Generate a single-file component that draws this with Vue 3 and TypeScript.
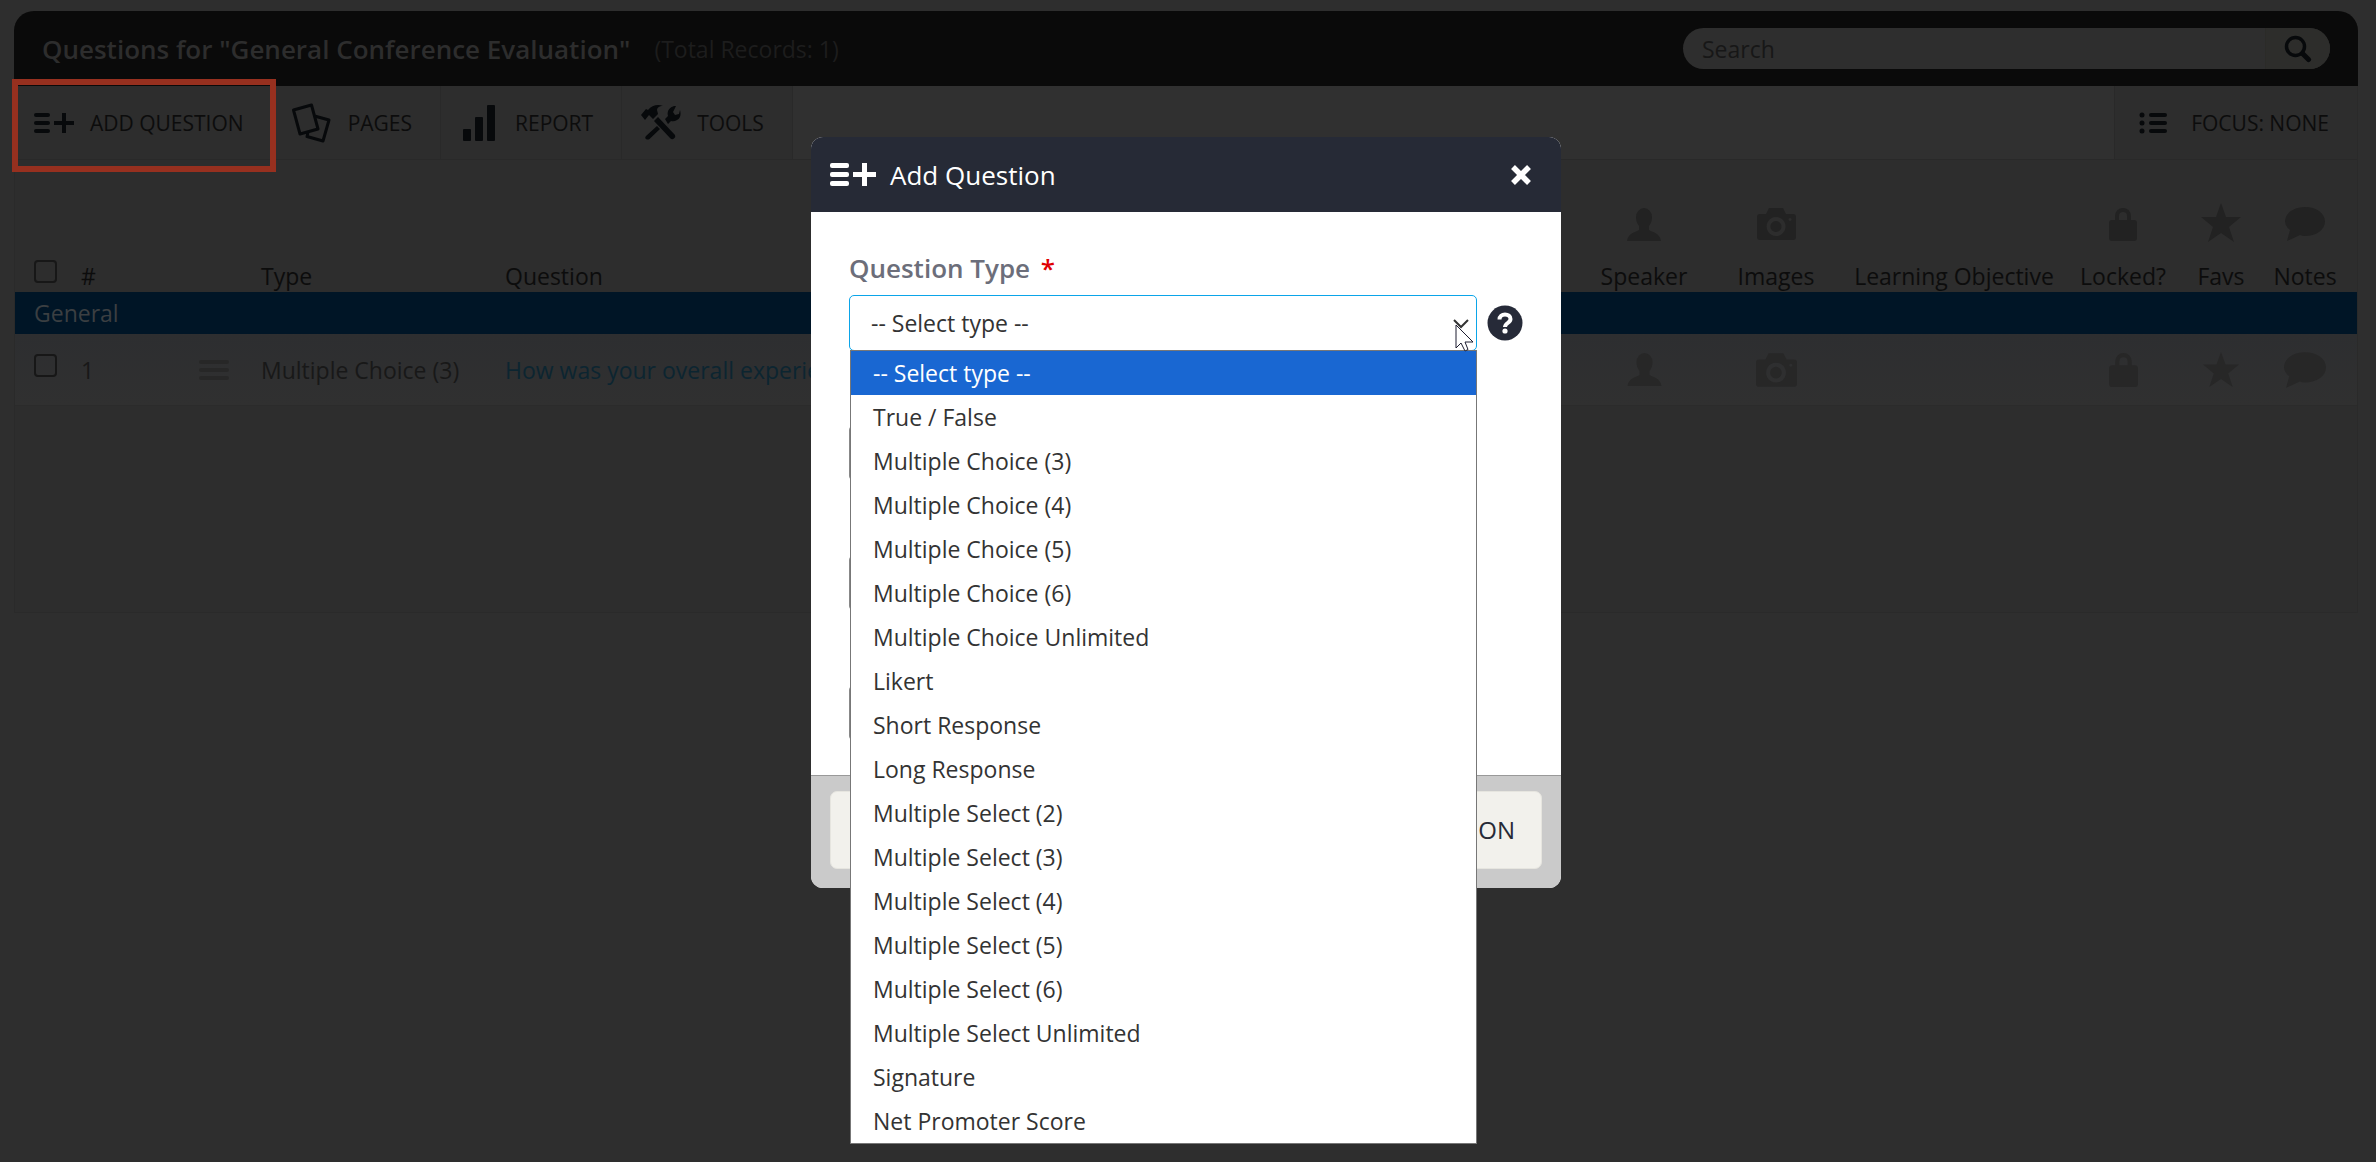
<script setup lang="ts">
import { ref } from 'vue'

interface IconColumn {
  label: string
  icon: string
}

const types: string[] = [
  '-- Select type --',
  'True / False',
  'Multiple Choice (3)',
  'Multiple Choice (4)',
  'Multiple Choice (5)',
  'Multiple Choice (6)',
  'Multiple Choice Unlimited',
  'Likert',
  'Short Response',
  'Long Response',
  'Multiple Select (2)',
  'Multiple Select (3)',
  'Multiple Select (4)',
  'Multiple Select (5)',
  'Multiple Select (6)',
  'Multiple Select Unlimited',
  'Signature',
  'Net Promoter Score',
]

const lock = 'M6 13V9a8 8 0 0 1 16 0v4h3q3 0 3 3v15q0 3-3 3H3q-3 0-3-3V16q0-3 3-3zM10 13h8V9a4 4 0 0 0-8 0z'
const star = 'M20-4l5 14h15l-12 10 5 15-13-9-13 9 5-15L0 10h15z'
const bubble = 'M20 0c11 0 20 6 20 14.500S31 29 20 29q-3 0-5-1Q9 31 2 34l3-11Q0 19 0 14.500C0 6 9 0 20 0z'

const columns: IconColumn[] = [
  { label: 'Speaker', icon: 'M10 10a8 9 0 0 1 16 0c0 4-1 6-3 9v4c3 2 11 3 12 11H1c1-8 9-9 12-11v-4c-2-3-3-5-3-9z' },
  {
    label: 'Images',
    icon: 'M0 10q0-3 3-3h6l3-6h14l3 6h7q3 0 3 3v20q0 3-3 3H3q-3 0-3-3zM19 10a9.500 9.500 0 1 0 .1 0zM19 14a5.500 5.500 0 1 1-.1 0zM33 11a1.500 1.500 0 1 0 .1 0z',
  },
  { label: 'Learning Objective', icon: '' },
  { label: 'Locked?', icon: lock },
  { label: 'Favs', icon: star },
  { label: 'Notes', icon: bubble },
]

const selected = ref(types[0])
const search = ref('')
</script>

<template>
  <div class="page">
    <main class="panel">
      <header class="panel-head">
        <h1>Questions for "General Conference Evaluation"</h1>
        <span class="total">(Total Records: 1)</span>
        <form class="search" @submit.prevent>
          <input v-model="search" type="search" placeholder="Search" aria-label="Search" />
          <button type="submit" aria-label="Run search">
            <svg width="28" height="28" viewBox="0 0 28 28" fill="none" stroke="#07090b">
              <circle cx="11.500" cy="11.500" r="9" stroke-width="3.500" />
              <path d="M18.500 18.500l6 6" stroke-width="5" stroke-linecap="round" />
            </svg>
          </button>
        </form>
      </header>

      <nav class="toolbar">
        <button type="button" class="add">
          <svg width="40" height="22" viewBox="0 0 40 22" fill="#07090b">
            <rect y="1" width="16" height="4" rx="2" /><rect y="9" width="16" height="4" rx="2" /><rect y="17" width="16" height="4" rx="2" />
            <path d="M28 1h4v8h8v4h-8v8h-4v-8h-8V9h8z" />
          </svg>
          <span>ADD QUESTION</span>
        </button>
        <button type="button" class="pages">
          <svg width="40" height="40" viewBox="0 0 40 40" fill="none" stroke="#07090b" stroke-width="3" stroke-linejoin="round">
            <path d="M2.500 7L20.500 2l6.500 24-18 5zM23.500 13L38 17l-6 21-16-4.500 1-4" />
          </svg>
          <span>PAGES</span>
        </button>
        <button type="button" class="report">
          <svg width="32" height="36" viewBox="0 0 32 36" fill="#07090b">
            <rect y="24" width="8" height="12" rx="1" /><rect x="12" y="12" width="8" height="24" rx="1" /><rect x="24" width="8" height="36" rx="1" />
          </svg>
          <span>REPORT</span>
        </button>
        <button type="button" class="tools">
          <svg width="40" height="36" viewBox="0 0 40 36" fill="#07090b">
            <path d="M0 10l5-6 2 1C11 0 17-1 22 1c-4 0-6 2-6 4l1 4-5 5-4-4-4 5z" />
            <path d="M13 16l4-4 17 18q1 2-1 3.500t-3.500 0z" />
            <path d="M5 31l11-10 3 3L8.500 34q-2 1-3.500 0t0-3zM24 14l3-3q-2-7 6-10l2 0-3 6 2 3 4-1 1-4q2 7-3 10-3 2-6 1l-3 3z" />
          </svg>
          <span>TOOLS</span>
        </button>
        <button type="button" class="focus">
          <svg width="28" height="22" viewBox="0 0 28 22" fill="#07090b">
            <circle cx="3" cy="3" r="2.500" /><circle cx="3" cy="11" r="2.500" /><circle cx="3" cy="19" r="2.500" />
            <rect x="10" y="1" width="18" height="4" rx="2" /><rect x="10" y="9" width="18" height="4" rx="2" /><rect x="10" y="17" width="18" height="4" rx="2" />
          </svg>
          <span>FOCUS: NONE</span>
        </button>
      </nav>

      <table class="grid">
        <colgroup>
          <col class="w-check" /><col class="w-num" /><col class="w-drag" /><col class="w-type" /><col />
          <col class="w-speaker" /><col class="w-images" /><col class="w-learn" /><col class="w-lock" /><col class="w-fav" /><col class="w-note" />
        </colgroup>
        <thead>
          <tr>
            <th class="check"><input type="checkbox" aria-label="Select all questions" /></th>
            <th>#</th>
            <th></th>
            <th>Type</th>
            <th>Question</th>
            <th v-for="c in columns" :key="c.label" class="mid">
              <svg v-if="c.label === 'Speaker'" width="36" height="40" viewBox="0 0 36 40"><path :d="c.icon" /></svg>
              <svg v-else-if="c.label === 'Images'" width="39" height="40" viewBox="0 0 39 40"><path fill-rule="evenodd" :d="c.icon" /></svg>
              <svg v-else-if="c.label === 'Locked?'" width="28" height="40" viewBox="0 0 28 40"><path fill-rule="evenodd" :d="c.icon" /></svg>
              <svg v-else-if="c.icon" width="40" height="40" viewBox="0 0 40 40"><path :d="c.icon" /></svg>
              {{ c.label }}
            </th>
          </tr>
        </thead>
        <tbody>
          <tr class="group"><td colspan="11">General</td></tr>
          <tr class="row">
            <td class="check"><input type="checkbox" aria-label="Select question 1" /></td>
            <td>1</td>
            <td>
              <svg class="drag" width="30" height="22" viewBox="0 0 30 22">
                <rect y="1" width="30" height="4" rx="2" /><rect y="9" width="30" height="4" rx="2" /><rect y="17" width="30" height="4" rx="2" />
              </svg>
            </td>
            <td>Multiple Choice (3)</td>
            <td><a href="#">How was your overall experience?</a></td>
            <td v-for="c in columns" :key="c.label" class="mid">
              <svg v-if="c.label === 'Speaker'" width="37" height="36" viewBox="0 0 36 36"><path :d="c.icon" /></svg>
              <svg v-else-if="c.label === 'Images'" width="41" height="36" viewBox="0 0 39 34"><path fill-rule="evenodd" :d="c.icon" /></svg>
              <svg v-else-if="c.label === 'Locked?'" width="29" height="36" viewBox="0 0 28 35"><path fill-rule="evenodd" :d="c.icon" /></svg>
              <svg v-else-if="c.label === 'Favs'" width="36" height="36" viewBox="0 -4 40 40"><path :d="c.icon" /></svg>
              <svg v-else-if="c.label === 'Notes'" width="42" height="36" viewBox="0 0 40 34"><path :d="c.icon" /></svg>
            </td>
          </tr>
        </tbody>
      </table>
    </main>

    <div class="layer">
      <section class="modal" role="dialog" aria-labelledby="modal-title">
        <header class="modal-head">
          <svg width="46" height="24" viewBox="0 0 46 24" fill="#fff">
            <rect width="19" height="5" rx="2" /><rect y="9" width="19" height="5" rx="2" /><rect y="18" width="19" height="5" rx="2" />
            <path d="M32 0h5v9h9v5h-9v9h-5v-9h-9V9h9z" />
          </svg>
          <h2 id="modal-title">Add Question</h2>
          <button type="button" class="close" aria-label="Close">
            <svg width="20" height="20" viewBox="0 0 20 20" stroke="#fff" stroke-width="5.500"><path d="M2 2l16 16M18 2L2 18" /></svg>
          </button>
        </header>
        <div class="modal-body">
          <label for="qtype">Question Type <span class="req">*</span></label>
          <div class="field">
            <div class="select-wrap">
              <select id="qtype" v-model="selected">
                <option v-for="t in types" :key="t">{{ t }}</option>
              </select>
              <svg class="chevron" width="16" height="10" viewBox="0 0 16 10" fill="none" stroke="#333" stroke-width="2"><path d="M1 1l7 7 7-7" /></svg>
              <ul class="menu" role="listbox" aria-label="Question types">
                <li v-for="t in types" :key="t" role="option" :aria-selected="t === selected" :class="{ active: t === selected }">{{ t }}</li>
              </ul>
              <svg class="pointer" width="20" height="28" viewBox="0 0 20 28" fill="#fff" stroke="#1d1d30" stroke-width="1">
                <path d="M1 1v23l5-5 4 8 3-1.500-3-7.500h8z" />
              </svg>
            </div>
            <button type="button" class="help" aria-label="Help">
              <svg width="36" height="36" viewBox="0 0 36 36">
                <circle cx="18" cy="18" r="17.500" fill="#262a38" />
                <path d="M12.500 14.500c0-3.500 2.500-5 5.500-5s5.500 1.500 5.500 4.500c0 4-5.500 4-5.500 8" fill="none" stroke="#fff" stroke-width="4" />
                <circle cx="18" cy="26" r="2.600" fill="#fff" />
              </svg>
            </button>
          </div>
          <input class="text" type="text" aria-label="Question" />
          <input class="text" type="text" aria-label="Page" />
          <input class="text" type="text" aria-label="Order" />
        </div>
        <footer class="modal-foot">
          <button type="button">ADD QUESTION</button>
        </footer>
      </section>
    </div>
  </div>
</template>

<style>
body {
  background: #2e2e2e;
}
</style>

<style scoped>
.page {
  box-sizing: border-box;
  min-height: 100vh;
  padding: 11px 18px 0 14px;
  background: #2e2e2e;
  color: #0c0c0c;
  font-family: "Open Sans", "Noto Sans", sans-serif;
  font-size: 23px;
  line-height: 32px;
}
button,
input,
select {
  font: inherit;
  color: inherit;
}
button {
  padding: 0;
  border: 0;
  background: none;
}
svg {
  display: block;
  flex: none;
}
.panel {
  min-height: 602px;
  box-sizing: border-box;
  border-radius: 20px 20px 0 0;
  background: #2d2d2d;
  border: 1px solid #2a2a2a;
  border-top: 0;
}
.panel-head {
  display: flex;
  align-items: center;
  gap: 24px;
  height: 75px;
  margin: 0 -1px;
  padding: 0 28px 0 28px;
  border-radius: 20px 20px 0 0;
  background: #0a0a0a;
}
h1 {
  margin: 0;
  font-size: 26px;
  font-weight: 600;
  color: #2d2d2d;
}
.total {
  color: #1d1d1d;
}
.search {
  display: flex;
  width: 647px;
  height: 41px;
  margin-left: auto;
  overflow: hidden;
  border-radius: 21px;
  background: #2e2e2e;
}
.search input {
  flex: 1;
  min-width: 0;
  padding: 0 19px;
  border: 0;
  background: none;
  outline: 0;
}
.search input::placeholder {
  color: #171717;
  opacity: 1;
}
.search button {
  display: flex;
  align-items: center;
  width: 65px;
  padding-left: 18px;
  border-left: 1px solid #2b2b28;
  background: #2d2d2b;
}
.toolbar {
  display: flex;
  height: 73px;
  border-bottom: 1px solid #292929;
  background: #303030;
  font-size: 21px;
  font-weight: 500;
}
.toolbar button {
  display: flex;
  align-items: center;
  background: #2d2d2d;
  border-right: 1px solid #292929;
}
.toolbar .add {
  position: relative;
  gap: 16px;
  padding: 0 30px 0 19px;
}
.toolbar .add::after {
  content: "";
  position: absolute;
  inset: -7px -2px -13px -3px;
  border: 6px solid #97301f;
}
.toolbar .pages {
  gap: 17px;
  padding: 0 28px 0 16px;
}
.toolbar .report {
  gap: 20px;
  padding: 0 28px 0 22px;
}
.toolbar .tools {
  gap: 16px;
  padding: 0 28px 0 19px;
}
.toolbar .focus {
  gap: 24px;
  margin-left: auto;
  padding: 0 28px 0 24px;
  border-right: 0;
  border-left: 1px solid #292929;
}
.grid {
  width: 100%;
  table-layout: fixed;
  border-collapse: collapse;
}
.w-check { width: 66px; }
.w-num { width: 118px; }
.w-drag { width: 62px; }
.w-type { width: 244px; }
.w-speaker { width: 114px; }
.w-images { width: 150px; }
.w-learn { width: 206px; }
.w-lock { width: 132px; }
.w-fav { width: 64px; }
.w-note { width: 104px; }
.grid th,
.grid td {
  padding: 0;
  text-align: left;
  font-weight: 400;
  white-space: nowrap;
}
.grid th {
  height: 132px;
  font-weight: 500;
  vertical-align: bottom;
}
.grid .mid {
  text-align: center;
}
.grid .mid svg {
  margin: 0 auto;
  overflow: visible;
  fill: #222;
}
.grid th.mid svg {
  margin-bottom: 13px;
}
.grid .row svg {
  fill: #272727;
}
.grid .check {
  padding-left: 19px;
}
.check input {
  display: block;
  appearance: none;
  box-sizing: border-box;
  width: 23px;
  height: 23px;
  margin: 0 0 9px;
  border: 2px solid #171717;
  border-radius: 4px;
}
.grid .group td {
  height: 42px;
  padding-left: 19px;
  background: #001526;
  color: #3b3f42;
}
.row {
  background: linear-gradient(#2d2e30, #303030);
  color: #181818;
}
.grid .row td {
  height: 71px;
  border-bottom: 1px solid #2b2b2b;
}
.row a {
  color: #0c2530;
  text-decoration: none;
}
.layer {
  position: absolute;
  top: 0;
  left: 0;
  right: 0;
  display: flex;
  justify-content: center;
  padding: 137px 4px 0 0;
}
.modal {
  display: flex;
  flex-direction: column;
  width: 750px;
  border-radius: 12px;
  background: #fff;
  color: #333;
}
.modal-head {
  display: flex;
  align-items: center;
  gap: 14px;
  height: 75px;
  padding: 0 30px 0 19px;
  border-radius: 12px 12px 0 0;
  background: #262a36;
  color: #fff;
}
h2 {
  margin: 0;
  font-size: 26px;
  font-weight: 400;
}
.close {
  margin-left: auto;
}
.modal-body {
  display: flex;
  flex-direction: column;
  padding: 40px 38px 34px;
}
label {
  margin-bottom: 11px;
  color: #6c6e7a;
  font-size: 26px;
  font-weight: 600;
}
.req {
  margin-left: 4px;
  color: #e00000;
}
.field {
  display: flex;
  align-items: center;
  gap: 10px;
}
.select-wrap {
  position: relative;
  width: 628px;
}
select {
  display: block;
  appearance: none;
  box-sizing: border-box;
  width: 100%;
  height: 56px;
  padding: 0 21px;
  border: 1px solid #0ba5e9;
  border-radius: 5px;
  background: #fff;
  outline: 0;
}
.chevron {
  position: absolute;
  right: 8px;
  top: 24px;
}
.pointer {
  position: absolute;
  right: 2px;
  top: 29px;
}
.menu {
  position: absolute;
  top: 55px;
  left: 1px;
  right: 0;
  margin: 0;
  padding: 0;
  border: 1px solid #777;
  background: #fff;
  list-style: none;
}
.menu li {
  padding: 6px 22px;
}
.menu .active {
  background: #1967d2;
  color: #fff;
}
.text {
  box-sizing: border-box;
  width: 628px;
  height: 56px;
  margin-top: 74px;
  padding: 0 22px;
  border: 1px solid #888;
  border-radius: 5px;
}
.modal-foot {
  padding: 15px 19px 19px;
  border-top: 1px solid #999;
  border-radius: 0 0 12px 12px;
  background: #cacaca;
}
.modal-foot button {
  display: block;
  width: 100%;
  height: 78px;
  padding: 0 26px;
  border: 1px solid #e6e5df;
  border-radius: 7px;
  background: #f2f1ec;
  color: #262a36;
  font-size: 24px;
  text-align: right;
}
</style>
